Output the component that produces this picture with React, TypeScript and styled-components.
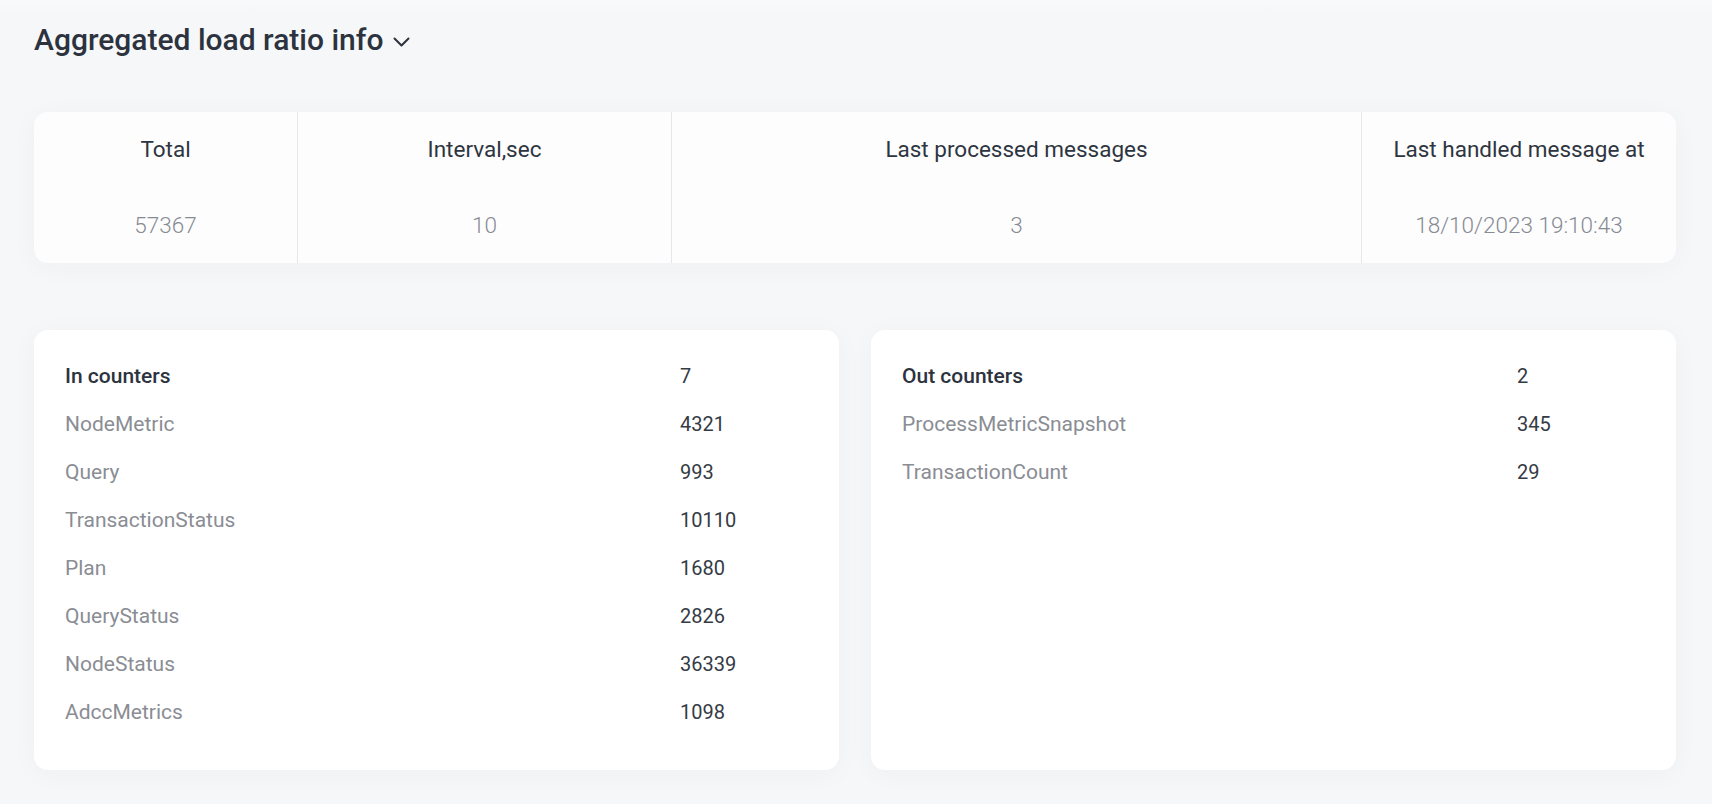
import styled, { createGlobalStyle } from "styled-components";

const GlobalStyle = createGlobalStyle`
  html, body {
    margin: 0;
    padding: 0;
    background: #f6f7f9;
  }
  body {
    font-family: Roboto, "Liberation Sans", sans-serif;
    color: #2d343e;
  }
`;

const Page = styled.main`
  min-height: 100vh;
  box-sizing: border-box;
  padding: 22px 36px 40px 34px;
  background: linear-gradient(#f8f9fa 0, #f6f7f9 14px);
`;

const Title = styled.h2`
  display: flex;
  align-items: center;
  gap: 10px;
  margin: 0;
  font-size: 30px;
  line-height: 36px;
  font-weight: 500;
  color: #2c333e;
  cursor: pointer;

  svg {
    margin-top: 3px;
  }
`;

const StatsCard = styled.section`
  display: grid;
  grid-template-columns: 263fr 374fr 690fr 315fr;
  margin-top: 54px;
  background: #fdfdfe;
  border-radius: 14px;
  box-shadow: 0 4px 28px rgba(40, 50, 70, 0.035);
`;

const StatCell = styled.div`
  display: flex;
  flex-direction: column;
  align-items: center;
  padding: 24px 12px 25px;

  & + & {
    border-left: 1px solid #e4e7eb;
  }
`;

const StatLabel = styled.div`
  font-size: 22.5px;
  line-height: 26px;
  color: #2e3540;
  white-space: nowrap;
`;

const StatValue = styled.div`
  margin-top: 50px;
  font-size: 22.5px;
  line-height: 26px;
  font-weight: 300;
  color: #878b93;
  white-space: nowrap;
`;

const CountersGrid = styled.div`
  display: grid;
  grid-template-columns: 1fr 1fr;
  gap: 32px;
  margin-top: 67px;
`;

const CounterCard = styled.section`
  display: grid;
  grid-template-columns: 1fr 128px;
  grid-auto-rows: 48px;
  align-content: start;
  align-items: center;
  padding: 22px 31px 34px;
  background: #ffffff;
  border-radius: 14px;
  box-shadow: 0 4px 28px rgba(40, 50, 70, 0.035);
`;

const CounterName = styled.div<{ $head?: boolean }>`
  font-size: 21px;
  line-height: 24px;
  font-weight: ${(p) => (p.$head ? 500 : 400)};
  color: ${(p) => (p.$head ? "#2c333e" : "#8a8d94")};
`;

const CounterValue = styled.div`
  font-size: 20px;
  line-height: 24px;
  color: #353b45;
`;

const stats = [
  { label: "Total", value: "57367" },
  { label: "Interval,sec", value: "10" },
  { label: "Last processed messages", value: "3" },
  { label: "Last handled message at", value: "18/10/2023 19:10:43" },
];

const inCounters: [string, number][] = [
  ["NodeMetric", 4321],
  ["Query", 993],
  ["TransactionStatus", 10110],
  ["Plan", 1680],
  ["QueryStatus", 2826],
  ["NodeStatus", 36339],
  ["AdccMetrics", 1098],
];

const outCounters: [string, number][] = [
  ["ProcessMetricSnapshot", 345],
  ["TransactionCount", 29],
];

function Chevron() {
  return (
    <svg width="17" height="10" viewBox="0 0 17 10" fill="none">
      <polyline
        points="1.5,1.5 8.5,8.5 15.5,1.5"
        stroke="#2c333e"
        strokeWidth="2"
        strokeLinecap="round"
        strokeLinejoin="round"
      />
    </svg>
  );
}

interface CountersProps {
  title: string;
  items: [string, number][];
}

function Counters({ title, items }: CountersProps) {
  return (
    <CounterCard>
      <CounterName $head>{title}</CounterName>
      <CounterValue>{items.length}</CounterValue>
      {items.map(([name, count]) => [
        <CounterName key={name}>{name}</CounterName>,
        <CounterValue key={name + "-v"}>{count}</CounterValue>,
      ])}
    </CounterCard>
  );
}

export default function App() {
  return (
    <>
      <GlobalStyle />
      <Page>
        <Title>
          Aggregated load ratio info
          <Chevron />
        </Title>
        <StatsCard>
          {stats.map((s) => (
            <StatCell key={s.label}>
              <StatLabel>{s.label}</StatLabel>
              <StatValue>{s.value}</StatValue>
            </StatCell>
          ))}
        </StatsCard>
        <CountersGrid>
          <Counters title="In counters" items={inCounters} />
          <Counters title="Out counters" items={outCounters} />
        </CountersGrid>
      </Page>
    </>
  );
}
